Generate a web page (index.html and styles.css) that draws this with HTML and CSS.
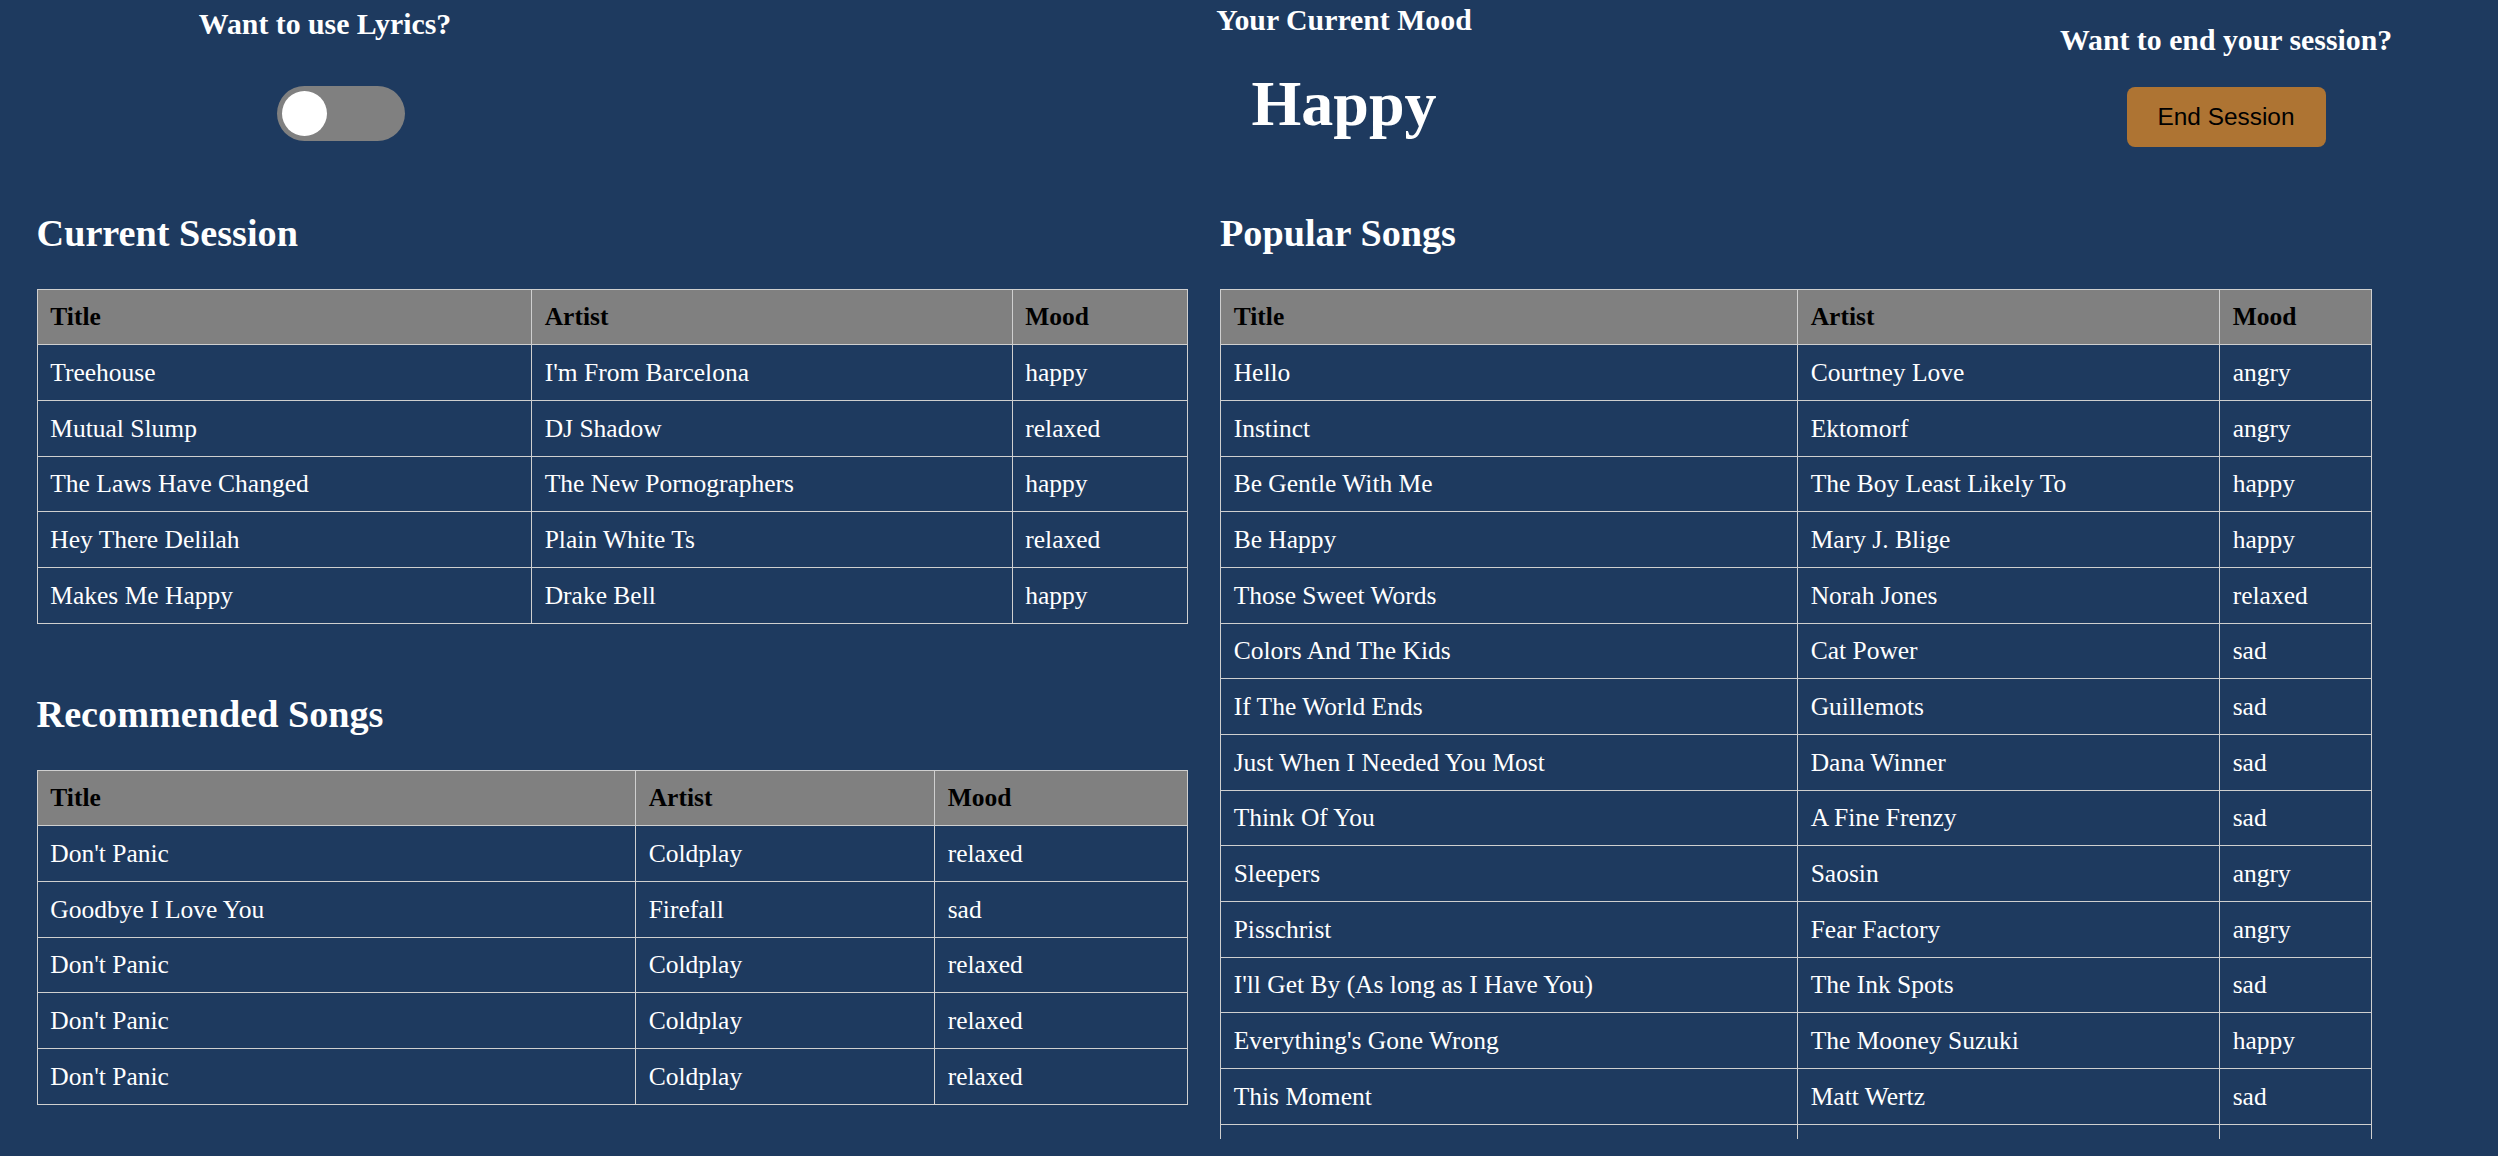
FILE: index.html
```html
<!DOCTYPE html>
<html lang="en">
<head>
<meta charset="utf-8">
<title>Mood Music</title>
<link rel="stylesheet" href="styles.css">
</head>
<body>
<header class="top">
  <div class="block block-lyrics">
    <h3 class="label">Want to use Lyrics?</h3>
    <div class="switch-wrap">
      <label class="switch">
        <input type="checkbox">
        <span class="slider"></span>
      </label>
    </div>
  </div>
  <div class="block block-mood">
    <h3 class="label">Your Current Mood</h3>
    <h1 class="mood">Happy</h1>
  </div>
  <div class="block block-end">
    <h3 class="label">Want to end your session?</h3>
    <button class="end-btn" type="button">End Session</button>
  </div>
</header>

<main class="main">
  <section class="col">
    <h2 class="section-title">Current Session</h2>
    <table class="songs t-session">
      <colgroup><col class="c1"><col class="c2"><col></colgroup>
      <thead><tr><th>Title</th><th>Artist</th><th>Mood</th></tr></thead>
      <tbody>
        <tr><td>Treehouse</td><td>I'm From Barcelona</td><td>happy</td></tr>
        <tr><td>Mutual Slump</td><td>DJ Shadow</td><td>relaxed</td></tr>
        <tr><td>The Laws Have Changed</td><td>The New Pornographers</td><td>happy</td></tr>
        <tr><td>Hey There Delilah</td><td>Plain White Ts</td><td>relaxed</td></tr>
        <tr><td>Makes Me Happy</td><td>Drake Bell</td><td>happy</td></tr>
      </tbody>
    </table>

    <h2 class="section-title second">Recommended Songs</h2>
    <table class="songs t-rec">
      <colgroup><col class="c1"><col class="c2"><col></colgroup>
      <thead><tr><th>Title</th><th>Artist</th><th>Mood</th></tr></thead>
      <tbody>
        <tr><td>Don't Panic</td><td>Coldplay</td><td>relaxed</td></tr>
        <tr><td>Goodbye I Love You</td><td>Firefall</td><td>sad</td></tr>
        <tr><td>Don't Panic</td><td>Coldplay</td><td>relaxed</td></tr>
        <tr><td>Don't Panic</td><td>Coldplay</td><td>relaxed</td></tr>
        <tr><td>Don't Panic</td><td>Coldplay</td><td>relaxed</td></tr>
      </tbody>
    </table>
  </section>

  <section class="col">
    <h2 class="section-title">Popular Songs</h2>
    <div class="scroll-box">
      <table class="songs t-pop">
        <colgroup><col class="c1"><col class="c2"><col></colgroup>
        <thead><tr><th>Title</th><th>Artist</th><th>Mood</th></tr></thead>
        <tbody>
          <tr><td>Hello</td><td>Courtney Love</td><td>angry</td></tr>
          <tr><td>Instinct</td><td>Ektomorf</td><td>angry</td></tr>
          <tr><td>Be Gentle With Me</td><td>The Boy Least Likely To</td><td>happy</td></tr>
          <tr><td>Be Happy</td><td>Mary J. Blige</td><td>happy</td></tr>
          <tr><td>Those Sweet Words</td><td>Norah Jones</td><td>relaxed</td></tr>
          <tr><td>Colors And The Kids</td><td>Cat Power</td><td>sad</td></tr>
          <tr><td>If The World Ends</td><td>Guillemots</td><td>sad</td></tr>
          <tr><td>Just When I Needed You Most</td><td>Dana Winner</td><td>sad</td></tr>
          <tr><td>Think Of You</td><td>A Fine Frenzy</td><td>sad</td></tr>
          <tr><td>Sleepers</td><td>Saosin</td><td>angry</td></tr>
          <tr><td>Pisschrist</td><td>Fear Factory</td><td>angry</td></tr>
          <tr><td>I'll Get By (As long as I Have You)</td><td>The Ink Spots</td><td>sad</td></tr>
          <tr><td>Everything's Gone Wrong</td><td>The Mooney Suzuki</td><td>happy</td></tr>
          <tr><td>This Moment</td><td>Matt Wertz</td><td>sad</td></tr>
          <tr><td>&nbsp;</td><td>&nbsp;</td><td>&nbsp;</td></tr>
        </tbody>
      </table>
    </div>
  </section>
</main>
</body>
</html>
```
FILE: styles.css
```css
html, body {
  margin: 0;
  padding: 0;
}

body {
  background: #1e3a5f;
  color: #ffffff;
  font-family: "Liberation Serif", "Times New Roman", serif;
  font-size: 25.5px;
  width: 2498px;
  height: 1156px;
  overflow: hidden;
}

/* ---------- top header ---------- */
.top {
  display: grid;
  grid-template-columns: 624px 1414px 350px;
  align-items: start;
  padding-left: 13px;
}

.block {
  text-align: center;
}

.label {
  margin: 0;
  font-size: 29.8px;
  font-weight: bold;
  line-height: 34.3px;
}

.block-lyrics .label { margin-top: 6.5px; }
.block-mood .label { margin-top: 2.5px; }
.block-end .label { margin-top: 23px; }

.switch-wrap {
  display: flex;
  justify-content: center;
  padding-left: 32px;
  margin-top: 45px;
}

.switch {
  position: relative;
  display: block;
  width: 128px;
  height: 55px;
}

.switch input {
  opacity: 0;
  width: 0;
  height: 0;
  margin: 0;
}

.slider {
  position: absolute;
  inset: 0;
  background: #808080;
  border-radius: 28px;
  cursor: pointer;
}

.slider::before {
  content: "";
  position: absolute;
  left: 5px;
  top: 5px;
  width: 45px;
  height: 45px;
  border-radius: 50%;
  background: #ffffff;
}

.mood {
  margin: 30px 0 0;
  font-size: 64px;
  font-weight: bold;
  line-height: 73.5px;
}

.end-btn {
  display: block;
  margin: 29.5px auto 0;
  width: 199px;
  height: 60px;
  padding: 0;
  border: none;
  border-radius: 8px;
  background: #ae7433;
  color: #000000;
  font-family: "Liberation Sans", Arial, sans-serif;
  font-size: 24.4px;
  cursor: pointer;
}

/* ---------- main two columns ---------- */
.main {
  display: grid;
  grid-template-columns: 1151.4px 1152px;
  column-gap: 32px;
  padding-left: 36.6px;
  align-items: start;
}

.section-title {
  margin: 65px 0 32.8px;
  font-size: 38.2px;
  font-weight: bold;
  line-height: 43.9px;
}

.section-title.second {
  margin-top: 69.5px;
}

.scroll-box {
  height: 850.4px;
  overflow-y: auto;
  scrollbar-width: none;
}

.scroll-box::-webkit-scrollbar {
  display: none;
}

.songs {
  width: 100%;
  table-layout: fixed;
  border-collapse: collapse;
  font-size: 25.5px;
}

.songs th,
.songs td {
  border: 1px solid #cfcfcf;
  padding: 12.7px;
  line-height: 29.3px;
  text-align: left;
  white-space: nowrap;
}

.songs th {
  background: #808080;
  color: #000000;
  font-weight: bold;
}

.songs td {
  color: #ffffff;
}

.t-session .c1 { width: 494.4px; }
.t-session .c2 { width: 480.6px; }

.t-rec .c1 { width: 598.4px; }
.t-rec .c2 { width: 299px; }

.t-pop .c1 { width: 577px; }
.t-pop .c2 { width: 422px; }
```
